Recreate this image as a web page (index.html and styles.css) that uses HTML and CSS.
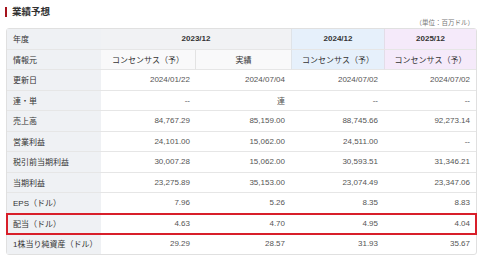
FILE: index.html
```html
<!DOCTYPE html>
<html lang="ja">
<head>
  <meta charset="UTF-8" />
  <meta name="viewport" content="width=device-width, initial-scale=1" />
  <title>業績予想</title>
  <link rel="stylesheet" href="styles.css">
</head>
<body>
<div class="section">
  <h2 class="section-title">業績予想</h2>
  <p class="unit">（単位：百万ドル）</p>

  <table class="forecast">
    <colgroup>
      <col class="c-label">
      <col class="c-a">
      <col class="c-b">
      <col class="c-c">
      <col class="c-d">
    </colgroup>
    <tr class="head">
      <th class="label">年度</th>
      <th class="y23" colspan="2">2023/12</th>
      <th class="y24">2024/12</th>
      <th class="y25">2025/12</th>
    </tr>
    <tr class="head sub">
      <th class="label">情報元</th>
      <td class="y23 split">コンセンサス（予）</td>
      <td class="y23b">実績</td>
      <td class="y24">コンセンサス（予）</td>
      <td class="y25">コンセンサス（予）</td>
    </tr>
    <tr>
      <th class="label">更新日</th>
      <td>2024/01/22</td><td>2024/07/04</td><td>2024/07/02</td><td>2024/07/02</td>
    </tr>
    <tr>
      <th class="label">連・単</th>
      <td>--</td><td>連</td><td>--</td><td>--</td>
    </tr>
    <tr>
      <th class="label">売上高</th>
      <td>84,767.29</td><td>85,159.00</td><td>88,745.66</td><td>92,273.14</td>
    </tr>
    <tr>
      <th class="label">営業利益</th>
      <td>24,101.00</td><td>15,062.00</td><td>24,511.00</td><td>--</td>
    </tr>
    <tr>
      <th class="label">税引前当期利益</th>
      <td>30,007.28</td><td>15,062.00</td><td>30,593.51</td><td>31,346.21</td>
    </tr>
    <tr>
      <th class="label">当期利益</th>
      <td>23,275.89</td><td>35,153.00</td><td>23,074.49</td><td>23,347.06</td>
    </tr>
    <tr>
      <th class="label">EPS（ドル）</th>
      <td>7.96</td><td>5.26</td><td>8.35</td><td>8.83</td>
    </tr>
    <tr class="mark">
      <th class="label">配当（ドル）</th>
      <td>4.63</td><td>4.70</td><td>4.95</td><td>4.04</td>
    </tr>
    <tr class="last">
      <th class="label">1株当り純資産（ドル）</th>
      <td>29.29</td><td>28.57</td><td>31.93</td><td>35.67</td>
    </tr>
  </table>
</div>
</body>
</html>
```

FILE: styles.css
```css
/* ページ全体 */
body {
  margin: 0;
  background: #fff;
  font-family: "Liberation Sans", "Noto Sans CJK JP", sans-serif;
  color: #333;
}

.section {
  padding: 7px 4px 0 6px;
}

/* 見出し */
.section-title {
  margin: 0 0 0 -1px;
  padding-left: 5px;
  border-left: 2px solid #a5121c;
  font-size: 9.5px;
  line-height: 10px;
  font-weight: bold;
  color: #333;
}

.unit {
  margin: 1px 2px 0 0;
  text-align: right;
  font-size: 6.5px;
  line-height: 10px;
  color: #777;
}

/* 表 */
.forecast {
  width: 470px;
  margin-top: 0;
  border-collapse: separate;
  border-spacing: 0;
  border: 1px solid #e0e0e0;
  border-radius: 3px;
  table-layout: fixed;
  font-size: 8px;
}

.c-label { width: 94px; }
.c-a { width: 95px; }
.c-b { width: 95px; }
.c-c { width: 93px; }
.c-d { width: 92px; }

.forecast th,
.forecast td {
  height: 19.5px;
  padding: 0 6px;
  border-bottom: 1px solid #e6e6e6;
  white-space: nowrap;
}

.forecast td {
  text-align: right;
  color: #555;
}

.forecast th.label {
  text-align: left;
  font-weight: normal;
  color: #333;
  background: #eff1f4;
}

.forecast tr.last th,
.forecast tr.last td {
  border-bottom: none;
}

/* 年度・情報元 */
.head th,
.head td {
  text-align: center;
  color: #333;
}

.head th.y23,
.head th.y24,
.head th.y25 {
  font-weight: bold;
}

.head .y23 { background: #f1f2f4; }
.sub .y23,
.sub .y23b { background: #f9f9fa; }
.head .y24 { background: #e6f0fb; border-left: 1px solid #dfe3e8; }
.head .y25 { background: #f5eafa; border-left: 1px solid #e3dde8; }
.sub .split { border-right: 1px solid #e3e3e3; }

/* 配当の強調 */
.forecast tr.mark {
  outline: 2px solid #d81f2a;
  outline-offset: -1px;
}
```
